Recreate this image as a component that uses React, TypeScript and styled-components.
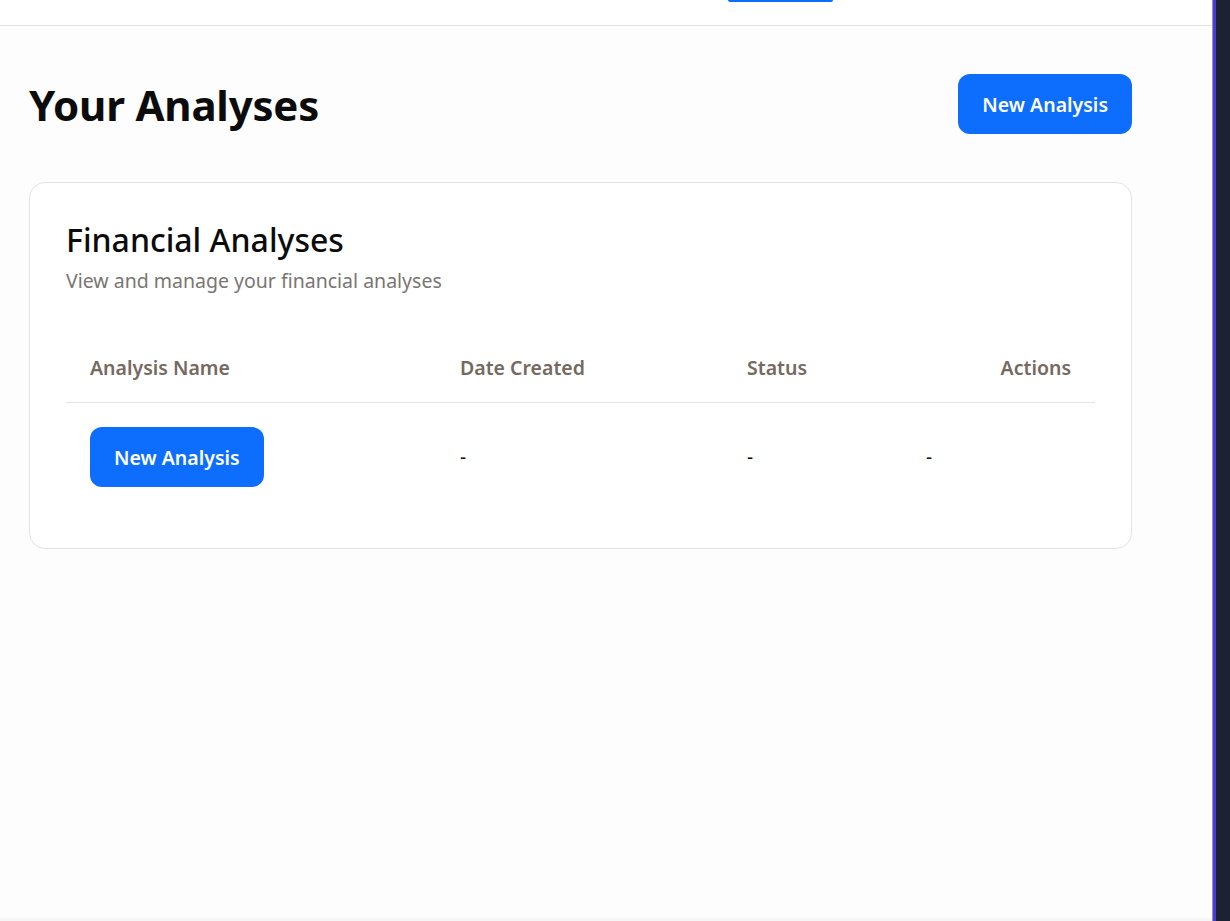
import React from 'react';
import styled, { createGlobalStyle } from 'styled-components';

const GlobalStyle = createGlobalStyle`
  html, body {
    margin: 0;
    padding: 0;
    height: 100%;
  }
  body {
    font-family: "Noto Sans", "Open Sans", sans-serif;
    background-color: #fdfdfd;
    color: #111;
  }
  #root {
    height: 100%;
  }
`;

type Row = {
  date: string;
  status: string;
  action: string;
};

const rows: Row[] = [{ date: '-', status: '-', action: '-' }];

export default function App() {
  return (
    <Frame>
      <GlobalStyle />
      <Page>
        <TopBar>
          <TabMark />
        </TopBar>
        <Main>
          <HeaderRow>
            <Title>Your Analyses</Title>
            <BlueButton>New Analysis</BlueButton>
          </HeaderRow>
          <Card>
            <CardTitle>Financial Analyses</CardTitle>
            <CardSub>View and manage your financial analyses</CardSub>
            <Table>
              <thead>
                <tr>
                  <Th>Analysis Name</Th>
                  <Th>Date Created</Th>
                  <Th>Status</Th>
                  <Th align="right">Actions</Th>
                </tr>
              </thead>
              <tbody>
                {rows.map((row, idx) => (
                  <tr key={idx}>
                    <Td>
                      <BlueButton>New Analysis</BlueButton>
                    </Td>
                    <Td>{row.date}</Td>
                    <Td>{row.status}</Td>
                    <Td>{row.action}</Td>
                  </tr>
                ))}
              </tbody>
            </Table>
          </Card>
        </Main>
        <BottomEdge />
      </Page>
      <SideRail />
    </Frame>
  );
}

const Frame = styled.div`
  display: flex;
  width: 100%;
  height: 100vh;
  overflow: hidden;
`;

const Page = styled.div`
  flex: 1;
  display: flex;
  flex-direction: column;
  background-color: #fdfdfd;
`;

const TopBar = styled.div`
  height: 25px;
  flex-shrink: 0;
  border-bottom: 1px solid #e3e3e3;
  padding-left: 728px;
  background-color: #ffffff;
`;

const TabMark = styled.div`
  width: 105px;
  height: 2px;
  background-color: #0d6efd;
  border-radius: 0 0 4px 4px;
`;

const Main = styled.main`
  flex: 1;
  padding: 48px 0 0 29px;
`;

const HeaderRow = styled.div`
  width: 1103px;
  display: flex;
  justify-content: space-between;
  align-items: center;
  margin-bottom: 48px;
`;

const Title = styled.h1`
  margin: 0;
  font-size: 42px;
  font-weight: 700;
  letter-spacing: -0.2px;
  line-height: 59px;
  color: #0c0c0c;
`;

const BlueButton = styled.button`
  font-family: inherit;
  border: none;
  background-color: #0d6efd;
  color: #ffffff;
  font-size: 19.5px;
  font-weight: 600;
  border-radius: 12px;
  height: 60px;
  padding: 0 24px;
  cursor: pointer;
  white-space: nowrap;
`;

const Card = styled.section`
  width: 1103px;
  box-sizing: border-box;
  border: 1px solid #e3e3e3;
  border-radius: 16px;
  background-color: #ffffff;
  padding: 37px 36px 37px 36px;
`;

const CardTitle = styled.h2`
  margin: 0;
  font-size: 32px;
  font-weight: 500;
  line-height: 40px;
  color: #0c0c0c;
`;

const CardSub = styled.p`
  margin: 8px 0 0;
  font-size: 19.5px;
  line-height: 26px;
  color: #7a7572;
`;

const Table = styled.table`
  width: 100%;
  margin-top: 38px;
  border-collapse: collapse;

  th, td { box-sizing: border-box; }
  th:nth-child(1), td:nth-child(1) { width: 370px; }
  th:nth-child(2), td:nth-child(2) { width: 287px; }
  th:nth-child(3), td:nth-child(3) { width: 179px; }
`;

const Th = styled.th<{ align?: 'left' | 'right' }>`
  text-align: ${p => p.align || 'left'};
  padding: 22px 24px 21px;
  font-size: 19.5px;
  font-weight: 600;
  color: #76695f;
  border-bottom: 1px solid #e3e3e3;
`;

const Td = styled.td`
  padding: 24px 24px;
  font-size: 19px;
  color: #111;
  vertical-align: middle;
`;

const BottomEdge = styled.div`
  height: 3px;
  flex-shrink: 0;
  background-color: #f6f6f6;
`;

const SideRail = styled.div`
  width: 17px;
  box-sizing: border-box;
  flex-shrink: 0;
  background-color: #1d2233;
  border-left: 3px solid #4a3ccf;
  box-shadow: -1px 0 0 #9a90d8;
`;
